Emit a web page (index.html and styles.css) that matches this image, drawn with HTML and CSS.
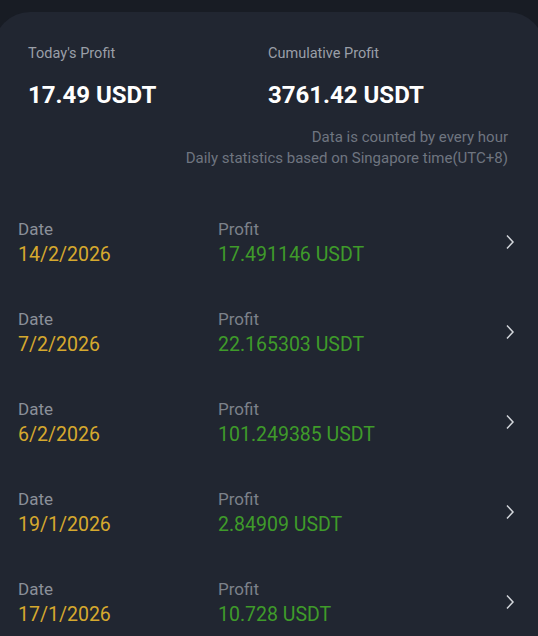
FILE: index.html
```html
<!DOCTYPE html>
<html lang="en">
<head>
    <meta charset="UTF-8">
    <meta name="viewport" content="width=device-width, initial-scale=1.0">
    <title>Profit</title>
    <link rel="stylesheet" href="styles.css">
</head>
<body>
    <div class="card">
        <div class="summary">
            <div class="stat">
                <p class="stat-label">Today's Profit</p>
                <p class="stat-value">17.49 USDT</p>
            </div>
            <div class="stat">
                <p class="stat-label">Cumulative Profit</p>
                <p class="stat-value">3761.42 USDT</p>
            </div>
        </div>
        <div class="note">
            <p>Data is counted by every hour</p>
            <p>Daily statistics based on Singapore time(UTC+8)</p>
        </div>

        <ul class="records">
            <li class="record">
                <div class="col date-col">
                    <span class="label">Date</span>
                    <span class="date">14/2/2026</span>
                </div>
                <div class="col">
                    <span class="label profit-label">Profit</span>
                    <span class="amount">17.491146 USDT</span>
                </div>
                <svg class="chevron" viewBox="0 0 10 16"><path d="M2 1.5 L8 8 L2 14.5"/></svg>
            </li>
            <li class="record">
                <div class="col date-col">
                    <span class="label">Date</span>
                    <span class="date">7/2/2026</span>
                </div>
                <div class="col">
                    <span class="label profit-label">Profit</span>
                    <span class="amount">22.165303 USDT</span>
                </div>
                <svg class="chevron" viewBox="0 0 10 16"><path d="M2 1.5 L8 8 L2 14.5"/></svg>
            </li>
            <li class="record">
                <div class="col date-col">
                    <span class="label">Date</span>
                    <span class="date">6/2/2026</span>
                </div>
                <div class="col">
                    <span class="label profit-label">Profit</span>
                    <span class="amount">101.249385 USDT</span>
                </div>
                <svg class="chevron" viewBox="0 0 10 16"><path d="M2 1.5 L8 8 L2 14.5"/></svg>
            </li>
            <li class="record">
                <div class="col date-col">
                    <span class="label">Date</span>
                    <span class="date">19/1/2026</span>
                </div>
                <div class="col">
                    <span class="label profit-label">Profit</span>
                    <span class="amount">2.84909 USDT</span>
                </div>
                <svg class="chevron" viewBox="0 0 10 16"><path d="M2 1.5 L8 8 L2 14.5"/></svg>
            </li>
            <li class="record">
                <div class="col date-col">
                    <span class="label">Date</span>
                    <span class="date">17/1/2026</span>
                </div>
                <div class="col">
                    <span class="label profit-label">Profit</span>
                    <span class="amount">10.728 USDT</span>
                </div>
                <svg class="chevron" viewBox="0 0 10 16"><path d="M2 1.5 L8 8 L2 14.5"/></svg>
            </li>
        </ul>
    </div>
</body>
</html>
```

FILE: styles.css
```css
body {
    background-color: #181c24;
    color: #ffffff;
    font-family: Roboto, 'Noto Sans', sans-serif;
    margin: 0;
    overflow: hidden;
}

p {
    margin: 0;
}

.card {
    margin: 12px -6px 0;
    padding-top: 32px;
    background-color: #212631;
    border-radius: 36px 36px 0 0;
    min-height: 700px;
}

.summary {
    display: grid;
    grid-template-columns: 240px 1fr;
    padding: 0 34px;
}

.stat-label {
    font-size: 14.5px;
    line-height: 20px;
    color: #9a9fa8;
}

.stat-value {
    margin-top: 16px;
    font-size: 24px;
    line-height: 30px;
    font-weight: 700;
}

.note {
    margin-top: 17px;
    padding-right: 36px;
    text-align: right;
    font-size: 15px;
    line-height: 21px;
    color: #6f7580;
}

.records {
    list-style: none;
    margin: 28px 0 0;
    padding: 0;
}

.record {
    display: flex;
    align-items: center;
    height: 90px;
    padding: 0 29px 0 24px;
    box-sizing: border-box;
}

.col {
    display: flex;
    flex-direction: column;
    flex: 1;
}

.date-col {
    flex: 0 0 200px;
}

.label {
    font-size: 17px;
    line-height: 25px;
    color: #8b9099;
}

.profit-label {
    color: #7c818a;
}

.date {
    font-size: 19.5px;
    line-height: 25px;
    color: #d6a92e;
}

.amount {
    font-size: 19.5px;
    line-height: 25px;
    color: #3f9b2a;
}

.chevron {
    width: 10px;
    height: 16px;
    fill: none;
    stroke: #d3d6db;
    stroke-width: 1.5;
}
```
